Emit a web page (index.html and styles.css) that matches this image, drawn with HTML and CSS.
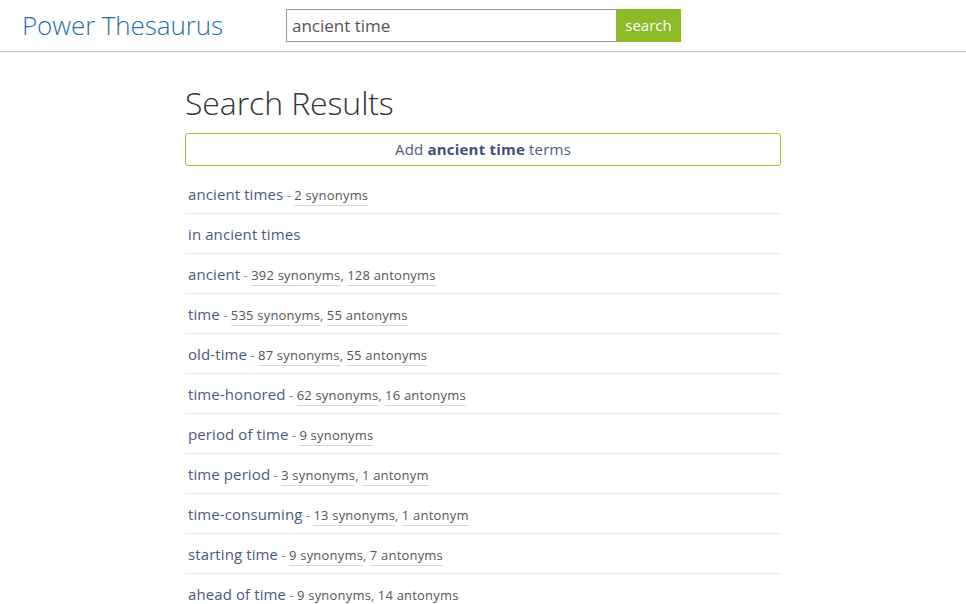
FILE: index.html
```html
<!DOCTYPE html>
<html>
<head>
<meta charset="utf-8">
<link rel="stylesheet" href="styles.css">
</head>
<body>
<header class="topbar">
  <a class="logo">Power Thesaurus</a>
  <form class="search">
    <input class="search-input" type="text" value="ancient time">
    <button class="search-btn" type="button">search</button>
  </form>
</header>
<main class="content">
  <h1 class="title">Search Results</h1>
  <a class="add-box">Add <b>ancient time</b> terms</a>
  <ul class="results">
    <li><a class="term">ancient times</a> <span class="sep">-</span> <a class="cnt">2 synonyms</a></li>
    <li><a class="term">in ancient times</a></li>
    <li><a class="term">ancient</a> <span class="sep">-</span> <a class="cnt">392 synonyms</a>, <a class="cnt">128 antonyms</a></li>
    <li><a class="term">time</a> <span class="sep">-</span> <a class="cnt">535 synonyms</a>, <a class="cnt">55 antonyms</a></li>
    <li><a class="term">old-time</a> <span class="sep">-</span> <a class="cnt">87 synonyms</a>, <a class="cnt">55 antonyms</a></li>
    <li><a class="term">time-honored</a> <span class="sep">-</span> <a class="cnt">62 synonyms</a>, <a class="cnt">16 antonyms</a></li>
    <li><a class="term">period of time</a> <span class="sep">-</span> <a class="cnt">9 synonyms</a></li>
    <li><a class="term">time period</a> <span class="sep">-</span> <a class="cnt">3 synonyms</a>, <a class="cnt">1 antonym</a></li>
    <li><a class="term">time-consuming</a> <span class="sep">-</span> <a class="cnt">13 synonyms</a>, <a class="cnt">1 antonym</a></li>
    <li><a class="term">starting time</a> <span class="sep">-</span> <a class="cnt">9 synonyms</a>, <a class="cnt">7 antonyms</a></li>
    <li><a class="term">ahead of time</a> <span class="sep">-</span> <a class="cnt">9 synonyms</a>, <a class="cnt">14 antonyms</a></li>
  </ul>
</main>
</body>
</html>
```
FILE: styles.css
```css
html, body {
  margin: 0;
  padding: 0;
  background: #fff;
  font-family: "Open Sans", "DejaVu Sans", sans-serif;
  overflow: hidden;
}
.topbar {
  height: 51px;
  border-bottom: 1px solid #c4c4c4;
  display: flex;
  align-items: center;
  padding-left: 22px;
}
.logo {
  font-weight: 300;
  font-size: 26px;
  color: #2b6cb0;
  width: 264px;
  letter-spacing: -0.1px;
  line-height: 1;
  margin-top: -1px;
}
.search {
  display: flex;
  margin: 0;
  margin-top: -1px;
}
.search-input {
  box-sizing: border-box;
  width: 330px;
  height: 33px;
  border: 1px solid #8c9bb0;
  border-right: none;
  padding: 0 5px;
  font-family: "Open Sans", sans-serif;
  font-size: 17px;
  color: #555;
  outline: none;
}
.search-btn {
  width: 65px;
  height: 33px;
  border: none;
  background: #8dba27;
  color: #fff;
  font-family: "Open Sans", sans-serif;
  font-size: 15px;
  padding: 0;
}
.content {
  width: 596px;
  margin: 0 auto;
}
.title {
  font-weight: 300;
  font-size: 32px;
  color: #333;
  margin: 29px 0 0 0;
  line-height: 44px;
  letter-spacing: -0.1px;
}
.add-box {
  display: block;
  margin-top: 8px;
  box-sizing: border-box;
  height: 33px;
  border: 1px solid #9bc439;
  border-radius: 3px;
  text-align: center;
  line-height: 31px;
  font-size: 15px;
  color: #4c5a80;
  letter-spacing: 0.2px;
}
.add-box b { font-weight: 700; color: #3f4f7a; }
.results {
  list-style: none;
  margin: 8px 0 0 0;
  padding: 0;
}
.results li {
  height: 39px;
  line-height: 41px;
  border-bottom: 1px solid #eaeaea;
  padding-left: 3px;
  font-size: 13px;
  color: #666;
  white-space: nowrap;
}
.term {
  font-size: 15px;
  color: #4c5a80;
  letter-spacing: 0.1px;
}
.sep { color: #888; }
.cnt {
  color: #555;
  border-bottom: 1px solid #d8d8d8;
  padding-bottom: 1px;
  letter-spacing: 0.2px;
}
```
